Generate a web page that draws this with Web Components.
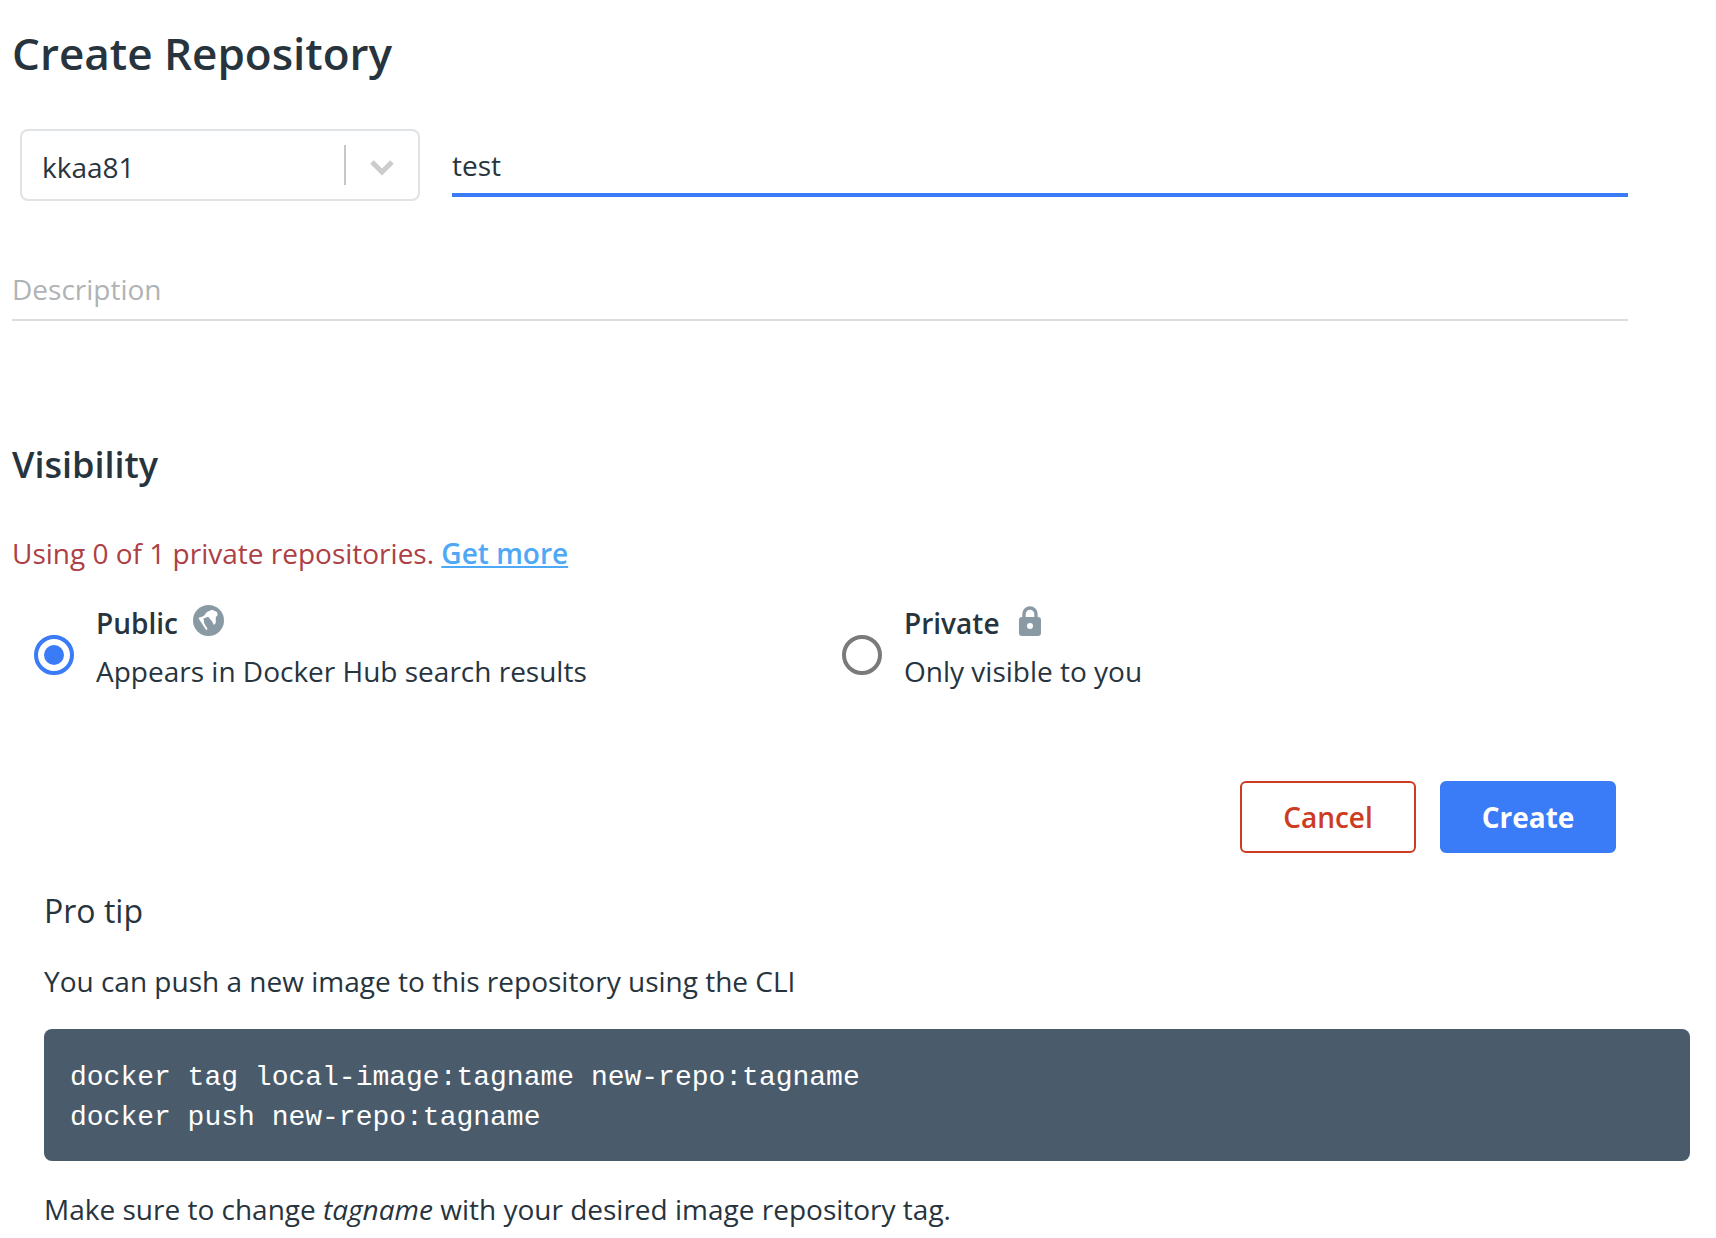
<!DOCTYPE html>
<html>
<head>
<meta charset="utf-8">
<title>Create Repository</title>
<style>
html, body { margin: 0; background: #fff; }
body { font-family: "Open Sans", sans-serif; color: #27343e; width: 1716px; height: 1238px; overflow: hidden; }
</style>
</head>
<body>
<create-repo-page>
  <namespace-select slot="namespace">kkaa81</namespace-select>
  <visibility-option slot="public" checked label="Public" icon="globe">Appears in Docker Hub search results</visibility-option>
  <visibility-option slot="private" label="Private" icon="lock">Only visible to you</visibility-option>
  <form-button slot="cancel" kind="cancel">Cancel</form-button>
  <form-button slot="create" kind="create">Create</form-button>
  <pro-tip slot="tip"></pro-tip>
</create-repo-page>

<script>
class NamespaceSelect extends HTMLElement {
    constructor() {
        super()
        this.shadowDOM = this.attachShadow({ mode: "open" })
    }

    connectedCallback() {
        this.shadowDOM.innerHTML =
        `
        <style>
        :host {
            display: flex;
            align-items: center;
            box-sizing: border-box;
            width: 400px;
            height: 72px;
            border: 2px solid #dfe3e6;
            border-radius: 8px;
            padding-left: 20px;
            font-size: 28px;
            color: #27343e;
        }
        .value { flex: 1; padding-top: 4px; }
        .sep { width: 2px; height: 40px; background: #c4c8cb; }
        .arrow { width: 72px; display: flex; justify-content: center; padding-top: 4px; }
        </style>
        <div class="value"><slot></slot></div>
        <div class="sep"></div>
        <div class="arrow">
            <svg width="26" height="18" viewBox="0 0 26 18"><path d="M3 4l10 10L23 4" fill="none" stroke="#cccccc" stroke-width="5"/></svg>
        </div>
        `
    }
}

class VisibilityOption extends HTMLElement {
    constructor() {
        super()
        this.shadowDOM = this.attachShadow({ mode: "open" })
    }

    get icon() {
        if (this.getAttribute("icon") === "globe") {
            return `<svg width="31" height="31" viewBox="30 33 98 98" style="margin-left:15px">
                <circle cx="79" cy="82" r="49" fill="#8a9aa5"/>
                <path d="M106 55L90 48 74 55 64 68 47 74 56 88 72 113 76 108 66 92 63 76 78 70 90 84 96 96 102 90 102 72 108 65z" fill="#fff"/>
            </svg>`
        }
        return `<svg width="22" height="30" viewBox="0 0 22 30" style="margin-left:19px">
            <path d="M5 12V8a6 6 0 0 1 12 0v4" fill="none" stroke="#8a9aa5" stroke-width="3.4"/>
            <rect x="0" y="11" width="22" height="19" rx="3" fill="#8a9aa5"/>
            <circle cx="11" cy="20" r="3" fill="#fff"/>
        </svg>`
    }

    connectedCallback() {
        const checked = this.hasAttribute("checked")
        this.shadowDOM.innerHTML =
        `
        <style>
        :host {
            display: flex;
            align-items: center;
            font-size: 28px;
            color: #27343e;
        }
        .radio {
            box-sizing: border-box;
            width: 40px;
            height: 40px;
            margin: 15px 22px 0 0;
            border-radius: 50%;
            border: 4px solid ${checked ? "#3a7bf7" : "#7a7a7a"};
            display: flex;
            align-items: center;
            justify-content: center;
        }
        .dot { width: 20px; height: 20px; border-radius: 50%; background: #3a7bf7; }
        .title { display: flex; align-items: center; height: 47px; font-weight: 600; }
        .title svg { position: relative; top: -2px; }
        .desc { line-height: 48px; padding-top: 1px; }
        </style>
        <div class="radio">${checked ? '<div class="dot"></div>' : ""}</div>
        <div>
            <div class="title"><span>${this.getAttribute("label")}</span>${this.icon}</div>
            <div class="desc"><slot></slot></div>
        </div>
        `
    }
}

class FormButton extends HTMLElement {
    constructor() {
        super()
        this.shadowDOM = this.attachShadow({ mode: "open" })
    }

    connectedCallback() {
        const cancel = this.getAttribute("kind") === "cancel"
        this.shadowDOM.innerHTML =
        `
        <style>
        :host {
            display: flex;
            align-items: center;
            justify-content: center;
            box-sizing: border-box;
            width: 176px;
            height: 72px;
            border-radius: 6px;
            font-size: 28px;
            font-weight: ${cancel ? 600 : 700};
            border: 2px solid ${cancel ? "#cc3b22" : "#3a7bf7"};
            background: ${cancel ? "#fff" : "#3a7bf7"};
            color: ${cancel ? "#cc3b22" : "#fff"};
        }
        </style>
        <slot></slot>
        `
    }
}

class ProTip extends HTMLElement {
    constructor() {
        super()
        this.shadowDOM = this.attachShadow({ mode: "open" })
    }

    connectedCallback() {
        this.shadowDOM.innerHTML =
        `
        <style>
        :host {
            display: block;
            padding-left: 44px;
            width: 1646px;
            font-size: 28px;
            color: #27343e;
        }
        h3 { margin: 0; font-size: 32px; font-weight: 400; line-height: 44px; }
        p { margin: 0; line-height: 40px; }
        .intro { margin-top: 28px; }
        pre {
            margin: 28px 0 0;
            height: 132px;
            box-sizing: border-box;
            padding: 29px 26px 0;
            background: #4a5c6c;
            border-radius: 8px;
            color: #fff;
            font: 28px/40px "Liberation Mono", monospace;
        }
        .outro { margin-top: 28px; }
        </style>
        <h3>Pro tip</h3>
        <p class="intro">You can push a new image to this repository using the CLI</p>
        <pre>docker tag local-image:tagname new-repo:tagname
docker push new-repo:tagname</pre>
        <p class="outro">Make sure to change <em>tagname</em> with your desired image repository tag.</p>
        `
    }
}

class CreateRepoPage extends HTMLElement {
    constructor() {
        super()
        this.shadowDOM = this.attachShadow({ mode: "open" })
    }

    connectedCallback() {
        this.shadowDOM.innerHTML =
        `
        <style>
        :host { display: block; padding-top: 23px; }
        h1 { margin: 0 0 0 12px; font-size: 44px; font-weight: 600; line-height: 60px; color: #27343e; }
        .name-row { display: flex; margin: 46px 0 0 20px; gap: 32px; width: 1608px; }
        .name {
            flex: 1;
            height: 68px;
            box-sizing: border-box;
            border-bottom: 4px solid #3a7bf7;
            font-size: 28px;
            line-height: 72px;
            color: #27343e;
        }
        .desc {
            margin: 40px 0 0 12px;
            width: 1616px;
            height: 80px;
            box-sizing: border-box;
            border-bottom: 2px solid #dcdcdc;
            padding: 30px 0 0;
            font-size: 28px;
            line-height: 36px;
            color: #b0b3b5;
        }
        h2 { margin: 120px 0 0 12px; font-size: 36px; font-weight: 600; line-height: 48px; color: #27343e; }
        .limit { margin: 44px 0 0 12px; font-size: 28px; line-height: 40px; color: #ad4044; }
        .limit a { color: #4ea8f5; font-weight: 600; text-decoration: underline; }
        .options { display: flex; margin: 26px 0 0 34px; }
        .options ::slotted([slot="public"]) { width: 808px; }
        .actions { display: flex; justify-content: flex-end; gap: 24px; margin-top: 86px; width: 1616px; }
        .tip { margin-top: 36px; }
        </style>
        <h1>Create Repository</h1>
        <div class="name-row">
            <slot name="namespace"></slot>
            <div class="name">test</div>
        </div>
        <div class="desc">Description</div>
        <h2>Visibility</h2>
        <div class="limit">Using 0 of 1 private repositories. <a>Get more</a></div>
        <div class="options">
            <slot name="public"></slot>
            <slot name="private"></slot>
        </div>
        <div class="actions">
            <slot name="cancel"></slot>
            <slot name="create"></slot>
        </div>
        <div class="tip"><slot name="tip"></slot></div>
        `
    }
}

customElements.define("namespace-select", NamespaceSelect)
customElements.define("visibility-option", VisibilityOption)
customElements.define("form-button", FormButton)
customElements.define("pro-tip", ProTip)
customElements.define("create-repo-page", CreateRepoPage)
</script>
</body>
</html>
